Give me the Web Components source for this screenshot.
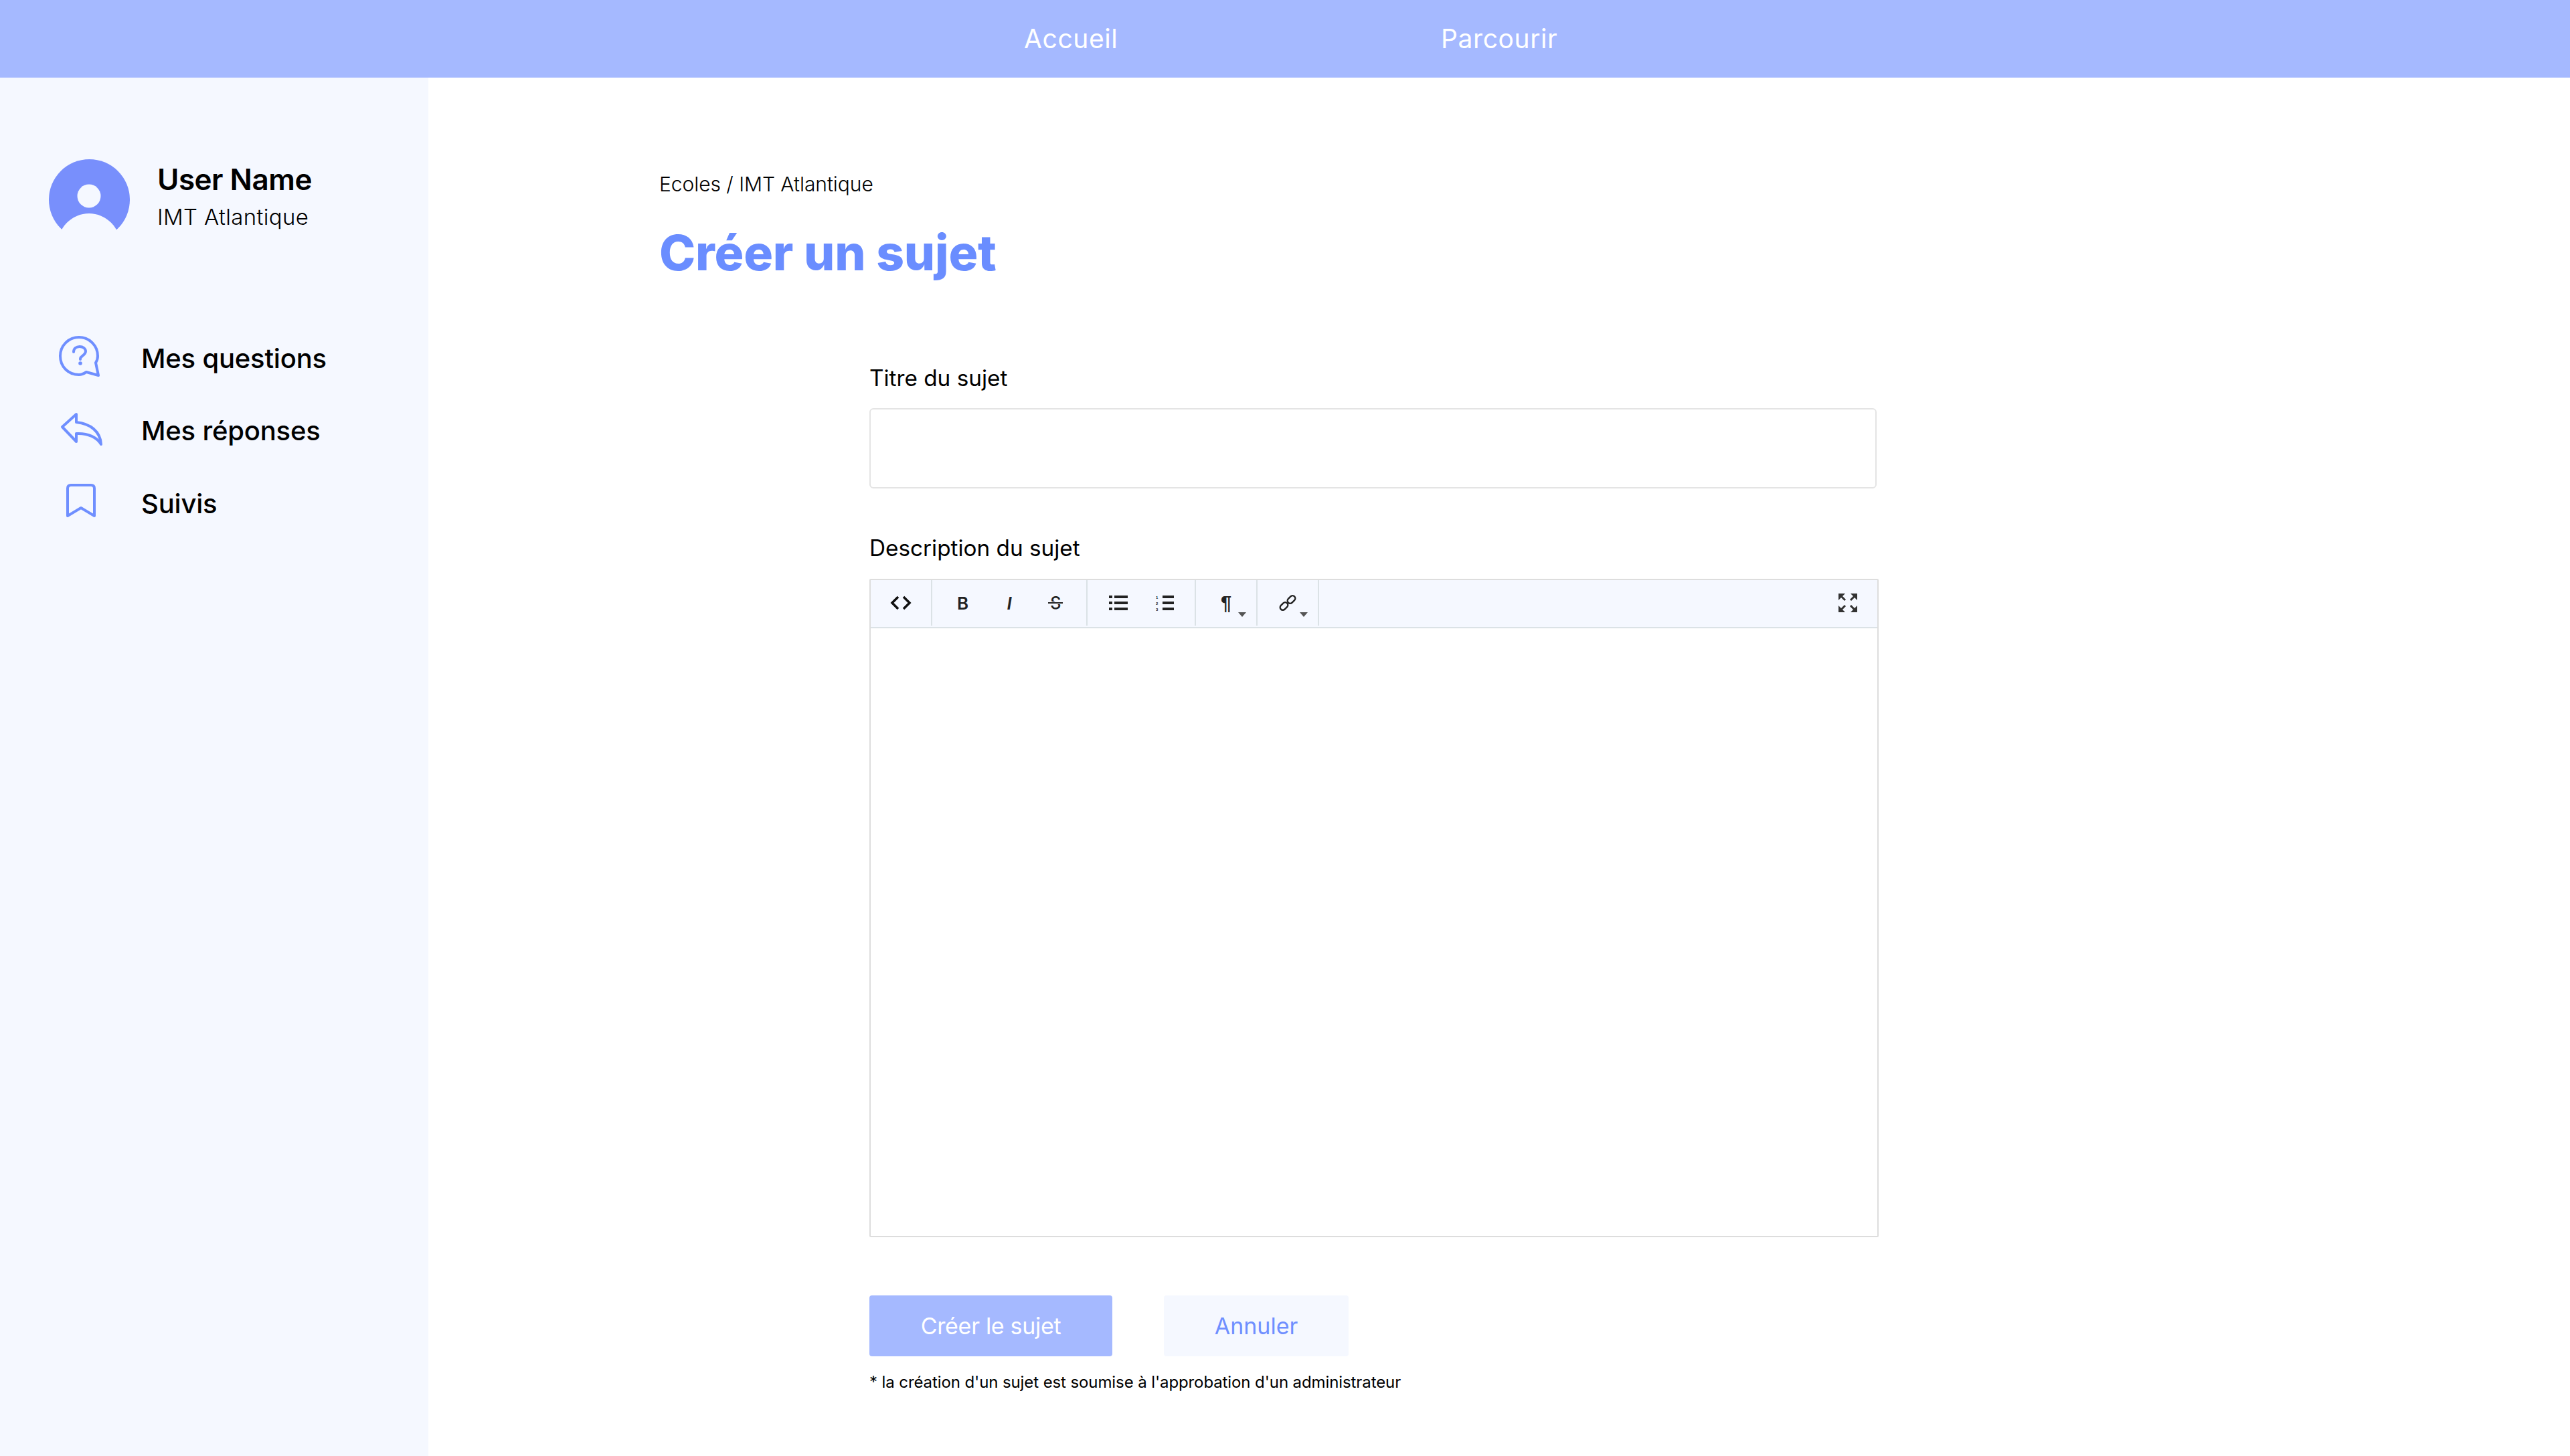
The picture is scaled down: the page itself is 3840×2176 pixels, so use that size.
<!DOCTYPE html>
<html lang="fr">
<head>
<meta charset="utf-8">
<title>Créer un sujet</title>
<style>
    html, body { margin: 0; padding: 0; }
    body { font-family: Inter, "Noto Sans", sans-serif; color: #000; background: #fff; }
</style>
</head>
<body>
<app-shell>
    <top-bar slot="top">
        <a slot="left">Accueil</a>
        <a slot="right">Parcourir</a>
    </top-bar>
    <side-bar slot="side">
        <user-card slot="user" name="User Name" school="IMT Atlantique"></user-card>
        <side-link icon="question">Mes questions</side-link>
        <side-link icon="reply">Mes réponses</side-link>
        <side-link icon="bookmark">Suivis</side-link>
    </side-bar>
    <subject-form></subject-form>
</app-shell>

<script>
const ICONS = {
    question: `<path d="M38 4C54 4 66 17 66 32C66 36 65 39 63 42L67 61L49 56C46 58 42 60 38 60C22 60 10 48 10 32C10 17 22 4 38 4Z"/>
        <path d="M30 26C30 21 34 18 39 18C44 18 48 21 48 25C48 29 44 31 42 33C40 34 40 35 40 37"/>
        <circle cx="40" cy="43" r="2.8" fill="#6f8fff" stroke="none"/>`,
    reply: `<path d="M13 29L34 10L34 22C55 24 70 36 71 55C65 45 52 38 34 39L34 51Z"/>`,
    bookmark: `<path d="M21 54L21 13Q21 8 26 8L56 8Q61 8 61 13L61 54L41 42Z"/>`
};

class AppShell extends HTMLElement {
    constructor() {
        super();
        this.attachShadow({ mode: 'open' });
        this.shadowRoot.innerHTML = `
            <style>
                :host { display: flex; flex-direction: column; height: 2176px; overflow: hidden; }
                .body { display: flex; flex: 1; min-height: 0; }
            </style>
            <slot name="top"></slot>
            <div class="body">
                <slot name="side"></slot>
                <slot></slot>
            </div>`;
    }
}

class TopBar extends HTMLElement {
    constructor() {
        super();
        this.attachShadow({ mode: 'open' });
        this.shadowRoot.innerHTML = `
            <style>
                :host { display: flex; height: 116px; background: #a5b9ff; color: #fff; font-size: 39px; line-height: 116px; letter-spacing: 0.6px; }
                .left { margin-left: 1530px; width: 623px; }
            </style>
            <div class="left"><slot name="left"></slot></div>
            <div><slot name="right"></slot></div>`;
    }
}

class SideBar extends HTMLElement {
    constructor() {
        super();
        this.attachShadow({ mode: 'open' });
        this.shadowRoot.innerHTML = `
            <style>
                :host { display: block; box-sizing: border-box; width: 640px; flex: none; background: #f5f8ff; padding: 122px 0 0 73px; }
                nav { display: flex; flex-direction: column; margin: 122px 0 0 7px; }
            </style>
            <slot name="user"></slot>
            <nav><slot></slot></nav>`;
    }
}

class UserCard extends HTMLElement {
    constructor() {
        super();
        this.attachShadow({ mode: 'open' });
        this.shadowRoot.innerHTML = `
            <style>
                :host { display: flex; gap: 41px; }
                svg { display: block; flex: none; }
                .info { padding-top: 2px; }
                .name { font-size: 44px; line-height: 56px; font-weight: 600; letter-spacing: -0.5px; }
                .school { font-size: 33px; line-height: 56px; font-weight: 300; letter-spacing: 0.35px; }
            </style>
            <svg width="121" height="121" viewBox="0 0 121 121">
                <circle cx="60.5" cy="60.5" r="60.5" fill="#788ffc"/>
                <ellipse cx="60" cy="55" rx="17.5" ry="17.5" fill="#f5f8ff"/>
                <ellipse cx="60" cy="129" rx="47" ry="48" fill="#f5f8ff"/>
            </svg>
            <div class="info">
                <div class="name"></div>
                <div class="school"></div>
            </div>`;
    }
    connectedCallback() {
        this.shadowRoot.querySelector('.name').textContent = this.getAttribute('name');
        this.shadowRoot.querySelector('.school').textContent = this.getAttribute('school');
    }
}

class SideLink extends HTMLElement {
    constructor() {
        super();
        this.attachShadow({ mode: 'open' });
        this.shadowRoot.innerHTML = `
            <style>
                :host { display: flex; align-items: center; gap: 51px; height: 108.5px; font-size: 40px; font-weight: 500; letter-spacing: -0.2px; }
                svg { display: block; flex: none; fill: none; stroke: #6f8fff; stroke-width: 4; stroke-linejoin: round; stroke-linecap: round; }
            </style>
            <svg width="80" height="70" viewBox="0 0 80 70"></svg>
            <slot></slot>`;
    }
    connectedCallback() {
        this.shadowRoot.querySelector('svg').innerHTML = ICONS[this.getAttribute('icon')] || '';
    }
}

class ToolBtn extends HTMLElement {
    constructor() {
        super();
        this.attachShadow({ mode: 'open' });
        this.shadowRoot.innerHTML = `
            <style>
                :host { display: flex; position: relative; align-items: center; justify-content: center; width: 70px; height: 70px; color: #222; font-size: 26px; }
                .caret { display: none; position: absolute; left: 53px; top: 49px; width: 0; height: 0; border: 6px solid transparent; border-top: 7px solid #555; border-bottom: 0; }
                :host([caret]) .caret { display: block; }
            </style>
            <slot></slot>
            <span class="caret"></span>`;
    }
}

class RichEditor extends HTMLElement {
    constructor() {
        super();
        this.attachShadow({ mode: 'open' });
        this.shadowRoot.innerHTML = `
            <style>
                :host { display: flex; flex-direction: column; box-sizing: border-box; width: 1508px; height: 984px; border: 2px solid #dddddd; border-radius: 2px; }
                .toolbar { display: flex; height: 70px; background: #f5f8ff; border-bottom: 2px solid #dbe2e6; flex: none; }
                .group { display: flex; height: 68px; padding: 0 11px; box-sizing: border-box; border-right: 2px solid #dbe2e6; }
                .group.first { width: 92px; padding: 0 10px; }
                .group.text { width: 232px; }
                .group.lists { width: 162px; }
                .group.drop { width: 92px; padding: 0 10px; }
                .spacer { flex: 1; }
                .full { margin-right: 9px; }
                svg { display: block; }
                .b { font-weight: 600; }
                .i { font-style: italic; font-weight: 600; }
                .s { position: relative; font-weight: 500; font-size: 25px; }
                .s::after { content: ""; position: absolute; left: -3px; right: -3px; top: 14px; height: 2px; background: #222; box-shadow: 0 0 0 1px #f5f8ff; }
                .p { font-family: "Liberation Sans", sans-serif; font-size: 29px; font-weight: 700; }
                .content { flex: 1; background: #fff; }
                tool-btn { margin-top: -1px; }
            </style>
            <div class="toolbar">
                <div class="group first">
                    <tool-btn>
                        <svg width="32" height="22" viewBox="0 0 32 22" fill="none" stroke="#111" stroke-width="3.6"><path d="M12 2L3 11L12 20M20 2L29 11L20 20"/></svg>
                    </tool-btn>
                </div>
                <div class="group text">
                    <tool-btn><span class="b">B</span></tool-btn>
                    <tool-btn><span class="i">I</span></tool-btn>
                    <tool-btn><span class="s">S</span></tool-btn>
                </div>
                <div class="group lists">
                    <tool-btn>
                        <svg width="28" height="22" viewBox="0 0 28 22" fill="#222"><path d="M0 0h5v4h-5zM8 0h20v4h-20zM0 9h5v4h-5zM8 9h20v4h-20zM0 18h5v4h-5zM8 18h20v4h-20z"/></svg>
                    </tool-btn>
                    <tool-btn>
                        <svg width="28" height="24" viewBox="0 0 28 24" fill="#222"><path d="M11 1h17v4h-17zM11 10h17v4h-17zM11 19h17v4h-17z"/><g font-family="Liberation Sans" font-size="6" font-weight="700"><text x="1" y="6">1</text><text x="1" y="15">2</text><text x="1" y="24">3</text></g></svg>
                    </tool-btn>
                </div>
                <div class="group drop">
                    <tool-btn caret><span class="p">¶</span></tool-btn>
                </div>
                <div class="group drop">
                    <tool-btn caret>
                        <svg width="26" height="26" viewBox="0 0 26 26" fill="none" stroke="#222" stroke-width="2.4"><rect x="12" y="4" width="13" height="8" rx="4" transform="rotate(-45 18.5 8)"/><rect x="1" y="14" width="13" height="8" rx="4" transform="rotate(-45 7.5 18)"/></svg>
                    </tool-btn>
                </div>
                <div class="spacer"></div>
                <div class="full">
                    <tool-btn>
                        <svg width="28" height="28" viewBox="0 0 28 28" fill="#333" stroke="#333"><path stroke="none" d="M0 0H10L0 10ZM28 0H18L28 10ZM0 28H10L0 18ZM28 28H18L28 18Z"/><path fill="none" stroke-width="3" d="M3 3L10 10M25 3L18 10M3 25L10 18M25 25L18 18"/></svg>
                    </tool-btn>
                </div>
            </div>
            <div class="content"></div>`;
    }
}

class ActionBtn extends HTMLElement {
    constructor() {
        super();
        this.attachShadow({ mode: 'open' });
        this.shadowRoot.innerHTML = `
            <style>
                :host { display: flex; align-items: center; justify-content: center; box-sizing: border-box; height: 91px; border-radius: 4px; font-size: 34px; background: #f5f8ff; color: #6f8fff; }
                :host([primary]) { background: #a5b9ff; color: #fff; letter-spacing: -0.3px; }
            </style>
            <slot></slot>`;
    }
}

class SubjectForm extends HTMLElement {
    constructor() {
        super();
        this.attachShadow({ mode: 'open' });
        this.shadowRoot.innerHTML = `
            <style>
                :host { display: block; flex: 1; padding: 135px 0 0 345px; }
                .crumb { font-size: 30px; line-height: 48px; font-weight: 300; letter-spacing: -0.05px; }
                h1 { margin: 29px 0 0; font-size: 73px; line-height: 100px; font-weight: 800; color: #6a8dff; letter-spacing: -0.2px; }
                .form { margin: 112px 0 0 314px; }
                label { display: block; font-size: 33.3px; line-height: 50px; }
                .input { box-sizing: border-box; width: 1505px; height: 120px; margin-top: 20px; border: 2px solid #e4e4e4; border-radius: 6px; }
                .desc { margin-top: 64px; }
                rich-editor { margin-top: 21px; }
                .actions { display: flex; gap: 77px; margin-top: 87px; }
                .create { width: 363px; }
                .cancel { width: 276px; }
                .note { margin-top: 19px; font-size: 24px; line-height: 40px; letter-spacing: -0.1px; }
            </style>
            <div class="crumb">Ecoles / IMT Atlantique</div>
            <h1>Créer un sujet</h1>
            <div class="form">
                <label>Titre du sujet</label>
                <div class="input"></div>
                <label class="desc">Description du sujet</label>
                <rich-editor></rich-editor>
                <div class="actions">
                    <action-btn class="create" primary>Créer le sujet</action-btn>
                    <action-btn class="cancel">Annuler</action-btn>
                </div>
                <div class="note">* la création d'un sujet est soumise à l'approbation d'un administrateur</div>
            </div>`;
    }
}

customElements.define('app-shell', AppShell);
customElements.define('top-bar', TopBar);
customElements.define('side-bar', SideBar);
customElements.define('user-card', UserCard);
customElements.define('side-link', SideLink);
customElements.define('tool-btn', ToolBtn);
customElements.define('rich-editor', RichEditor);
customElements.define('action-btn', ActionBtn);
customElements.define('subject-form', SubjectForm);
</script>
</body>
</html>
